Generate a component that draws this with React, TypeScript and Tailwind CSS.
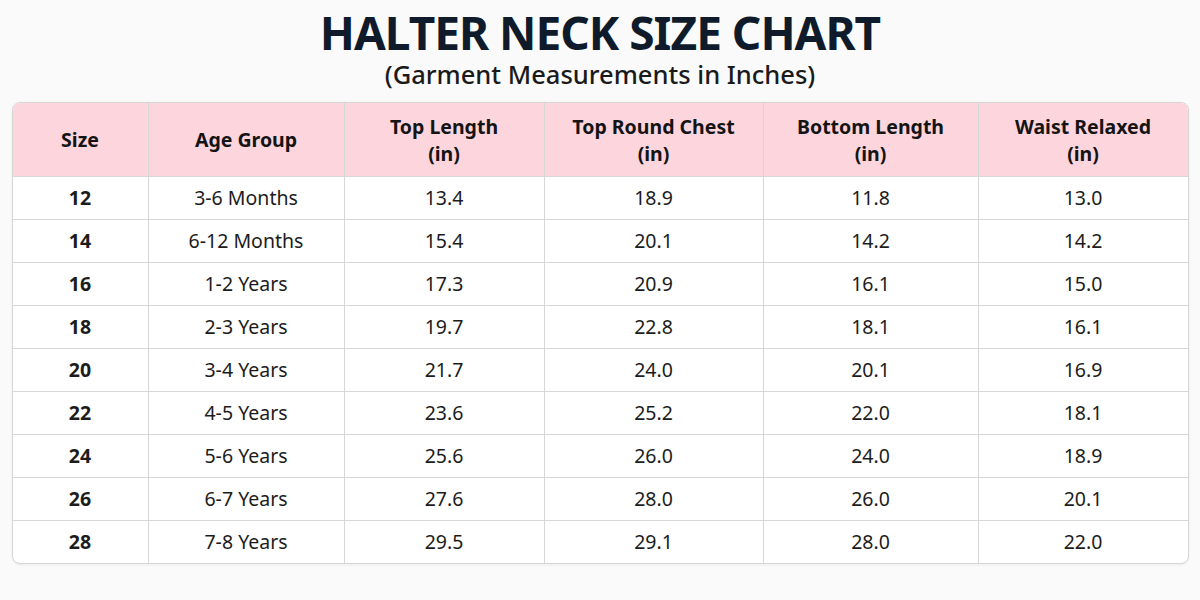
import React from "react";

const rows = [
  ["12", "3-6 Months", "13.4", "18.9", "11.8", "13.0"],
  ["14", "6-12 Months", "15.4", "20.1", "14.2", "14.2"],
  ["16", "1-2 Years", "17.3", "20.9", "16.1", "15.0"],
  ["18", "2-3 Years", "19.7", "22.8", "18.1", "16.1"],
  ["20", "3-4 Years", "21.7", "24.0", "20.1", "16.9"],
  ["22", "4-5 Years", "23.6", "25.2", "22.0", "18.1"],
  ["24", "5-6 Years", "25.6", "26.0", "24.0", "18.9"],
  ["26", "6-7 Years", "27.6", "28.0", "26.0", "20.1"],
  ["28", "7-8 Years", "29.5", "29.1", "28.0", "22.0"],
];

const headers: [string, string | null][] = [
  ["Size", null],
  ["Age Group", null],
  ["Top Length", "(in)"],
  ["Top Round Chest", "(in)"],
  ["Bottom Length", "(in)"],
  ["Waist Relaxed", "(in)"],
];

const cols = "grid grid-cols-[135px_196px_200px_219px_215px_1fr]";

export default function App() {
  return (
    <div
      className="w-[1200px] h-[600px] bg-[#fafafa] flex flex-col items-center"
      style={{ fontFamily: '"Noto Sans", "Open Sans", sans-serif' }}
    >
      <h1 className="mt-[7px] text-[46px] leading-[50px] font-bold text-[#0f1a2b] tracking-[-1px]">
        HALTER NECK SIZE CHART
      </h1>
      <p className="mt-[2px] text-[25.5px] leading-[30px] font-medium text-[#1a1a1a]">
        (Garment Measurements in Inches)
      </p>
      <div className="mt-[13px] w-[1177px] mx-auto rounded-[8px] border border-[#d6d6d6] bg-white overflow-hidden shadow-[0_1px_3px_rgba(0,0,0,0.06)]">
        <div className={`${cols} bg-[#fdd6dd] h-[73px]`}>
          {headers.map(([a, b], i) => (
            <div
              key={i}
              className={`flex flex-col items-center justify-center text-center font-bold text-[19.5px] leading-[27px] text-[#141414] ${
                i > 0 ? "border-l border-[#d6d6d6]" : ""
              }`}
            >
              <span>{a}</span>
              {b && <span>{b}</span>}
            </div>
          ))}
        </div>
        {rows.map((r, ri) => (
          <div key={ri} className={`${cols} h-[43px] border-t border-[#d6d6d6]`}>
            {r.map((c, ci) => (
              <div
                key={ci}
                className={`flex items-center justify-center text-[19.5px] text-[#1c1c1c] ${
                  ci === 0 ? "font-bold" : ""
                } ${ci > 0 ? "border-l border-[#d6d6d6]" : ""}`}
              >
                {c}
              </div>
            ))}
          </div>
        ))}
      </div>
    </div>
  );
}
